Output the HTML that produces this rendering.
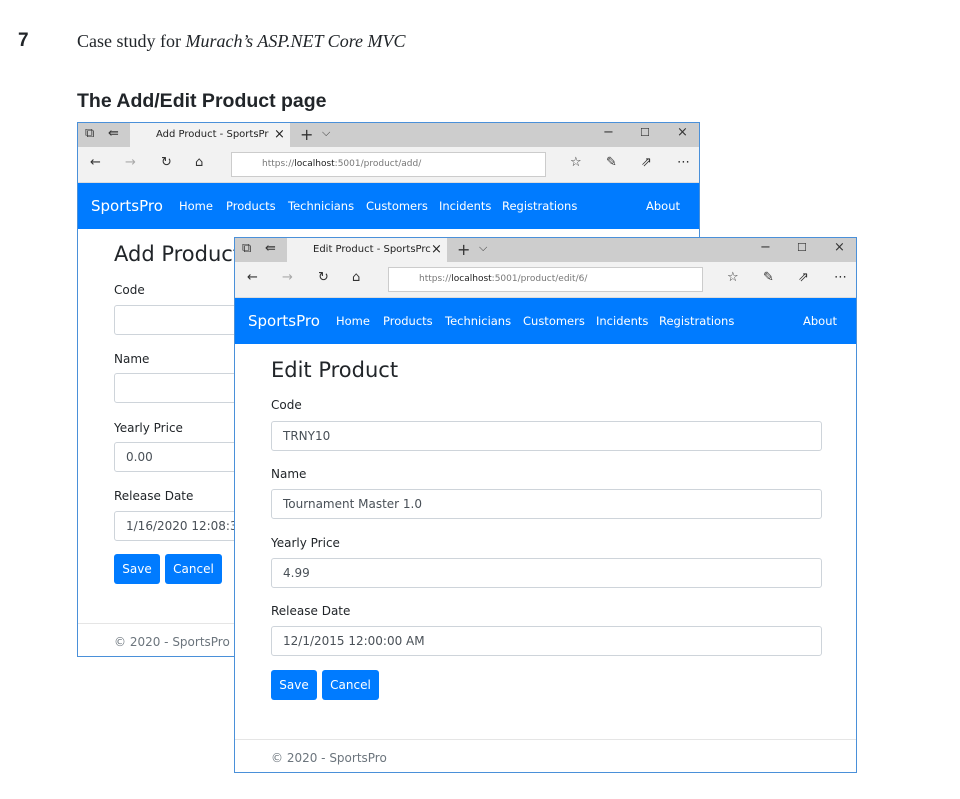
<!DOCTYPE html>
<html><head><meta charset="utf-8"><style>
*{box-sizing:border-box;margin:0;padding:0}
body{width:960px;height:799px;background:#fff;position:relative;overflow:hidden;font-family:"DejaVu Sans","Liberation Sans",sans-serif;color:#212529}
.a{position:absolute;white-space:nowrap}
.win{position:absolute;border:1px solid #4a90d9;background:#fff;overflow:hidden}
.tabs{position:absolute;left:0;top:0;right:0;height:24px;background:#cdcdcd}
.tab{position:absolute;left:52px;top:0;width:160px;height:24px;background:#f2f2f2;font-size:10px;line-height:24px;padding-left:26px;color:#222}
.addr{position:absolute;left:0;top:24px;right:0;height:36px;background:#f2f2f2;border-bottom:1px solid #ddd}
.url{position:absolute;left:153px;top:5px;width:315px;height:25px;background:#fff;border:1px solid #ccc;font-size:9px;line-height:23px;padding-left:30px;color:#777}
.url b{color:#222;font-weight:normal}
.nav{position:absolute;left:0;top:60px;right:0;height:46px;background:#007bff;color:#fff;font-size:11.5px;line-height:46px}
.nav span{position:absolute}
.ic{position:absolute;font-size:13px;color:#333}
.lbl{position:absolute;font-size:12px;color:#212529}
.inp{position:absolute;height:30px;border:1px solid #ced4da;border-radius:3px;font-size:12px;line-height:28px;padding-left:11px;color:#495057;background:#fff}
.btn{position:absolute;height:30px;background:#007bff;color:#fff;border-radius:3px;font-size:12px;line-height:30px;text-align:center}
.h{position:absolute;font-size:21px;color:#212529}
.foot{position:absolute;left:0;right:0;border-top:1px solid #e5e5e5;font-size:12px;color:#6c757d}
</style></head><body>
<div class="a" style="left:18px;top:30px;font:bold 19px 'Liberation Sans',sans-serif">7</div>
<div class="a" style="left:77px;top:31px;font:18px 'Liberation Serif',serif">Case study for <i>Murach’s ASP.NET Core MVC</i></div>
<div class="a" style="left:77px;top:90px;font:bold 19.5px 'Liberation Sans',sans-serif">The Add/Edit Product page</div>

<div class="win" style="left:77px;top:122px;width:623px;height:535px">
 <div class="tabs"><span class="ic" style="left:7px;top:3px">⧉</span><span class="ic" style="left:30px;top:3px">⇚</span>
 <div class="tab">Add Product - SportsPr<span style="position:absolute;left:144px;font-size:13px">×</span></div>
 <span class="ic" style="left:222px;top:2px;font-size:16px">+</span><span class="ic" style="left:244px;top:3px;font-size:11px">⌵</span>
 <span class="ic" style="left:525px;top:2px">−</span><span class="ic" style="left:562px;top:3px;font-size:11px">☐</span><span class="ic" style="left:599px;top:2px">×</span></div>
 <div class="addr"><span class="ic" style="left:12px;top:8px">←</span><span class="ic" style="left:47px;top:8px;color:#aaa">→</span><span class="ic" style="left:83px;top:8px">↻</span><span class="ic" style="left:117px;top:8px">⌂</span>
 <div class="url">https://<b>localhost</b>:5001/product/add/</div>
 <span class="ic" style="left:492px;top:8px">☆</span><span class="ic" style="left:528px;top:8px">✎</span><span class="ic" style="left:563px;top:8px">⇗</span><span class="ic" style="left:599px;top:8px">⋯</span></div>
 <div class="nav"><span style="left:13px;font-size:15px">SportsPro</span><span style="left:101px">Home</span><span style="left:148px">Products</span><span style="left:210px">Technicians</span><span style="left:288px">Customers</span><span style="left:361px">Incidents</span><span style="left:424px">Registrations</span><span style="left:568px">About</span></div>
 <div class="h" style="left:36px;top:119px">Add Product</div>
 <div class="lbl" style="left:36px;top:160px">Code</div><div class="inp" style="left:36px;top:182px;width:540px"></div>
 <div class="lbl" style="left:36px;top:229px">Name</div><div class="inp" style="left:36px;top:250px;width:540px"></div>
 <div class="lbl" style="left:36px;top:298px">Yearly Price</div><div class="inp" style="left:36px;top:319px;width:540px">0.00</div>
 <div class="lbl" style="left:36px;top:366px">Release Date</div><div class="inp" style="left:36px;top:388px;width:540px">1/16/2020 12:08:30 PM</div>
 <div class="btn" style="left:36px;top:431px;width:46px">Save</div><div class="btn" style="left:87px;top:431px;width:57px">Cancel</div>
 <div class="foot" style="top:500px;padding:11px 36px">© 2020 - SportsPro</div>
</div>

<div class="win" style="left:234px;top:237px;width:623px;height:536px">
 <div class="tabs"><span class="ic" style="left:7px;top:3px">⧉</span><span class="ic" style="left:30px;top:3px">⇚</span>
 <div class="tab">Edit Product - SportsPrc<span style="position:absolute;left:144px;font-size:13px">×</span></div>
 <span class="ic" style="left:222px;top:2px;font-size:16px">+</span><span class="ic" style="left:244px;top:3px;font-size:11px">⌵</span>
 <span class="ic" style="left:525px;top:2px">−</span><span class="ic" style="left:562px;top:3px;font-size:11px">☐</span><span class="ic" style="left:599px;top:2px">×</span></div>
 <div class="addr"><span class="ic" style="left:12px;top:8px">←</span><span class="ic" style="left:47px;top:8px;color:#aaa">→</span><span class="ic" style="left:83px;top:8px">↻</span><span class="ic" style="left:117px;top:8px">⌂</span>
 <div class="url">https://<b>localhost</b>:5001/product/edit/6/</div>
 <span class="ic" style="left:492px;top:8px">☆</span><span class="ic" style="left:528px;top:8px">✎</span><span class="ic" style="left:563px;top:8px">⇗</span><span class="ic" style="left:599px;top:8px">⋯</span></div>
 <div class="nav"><span style="left:13px;font-size:15px">SportsPro</span><span style="left:101px">Home</span><span style="left:148px">Products</span><span style="left:210px">Technicians</span><span style="left:288px">Customers</span><span style="left:361px">Incidents</span><span style="left:424px">Registrations</span><span style="left:568px">About</span></div>
 <div class="h" style="left:36px;top:120px">Edit Product</div>
 <div class="lbl" style="left:36px;top:160px">Code</div><div class="inp" style="left:36px;top:183px;width:551px">TRNY10</div>
 <div class="lbl" style="left:36px;top:229px">Name</div><div class="inp" style="left:36px;top:251px;width:551px">Tournament Master 1.0</div>
 <div class="lbl" style="left:36px;top:298px">Yearly Price</div><div class="inp" style="left:36px;top:320px;width:551px">4.99</div>
 <div class="lbl" style="left:36px;top:366px">Release Date</div><div class="inp" style="left:36px;top:388px;width:551px">12/1/2015 12:00:00 AM</div>
 <div class="btn" style="left:36px;top:432px;width:46px">Save</div><div class="btn" style="left:87px;top:432px;width:57px">Cancel</div>
 <div class="foot" style="top:501px;padding:11px 36px">© 2020 - SportsPro</div>
</div>
</body></html>
